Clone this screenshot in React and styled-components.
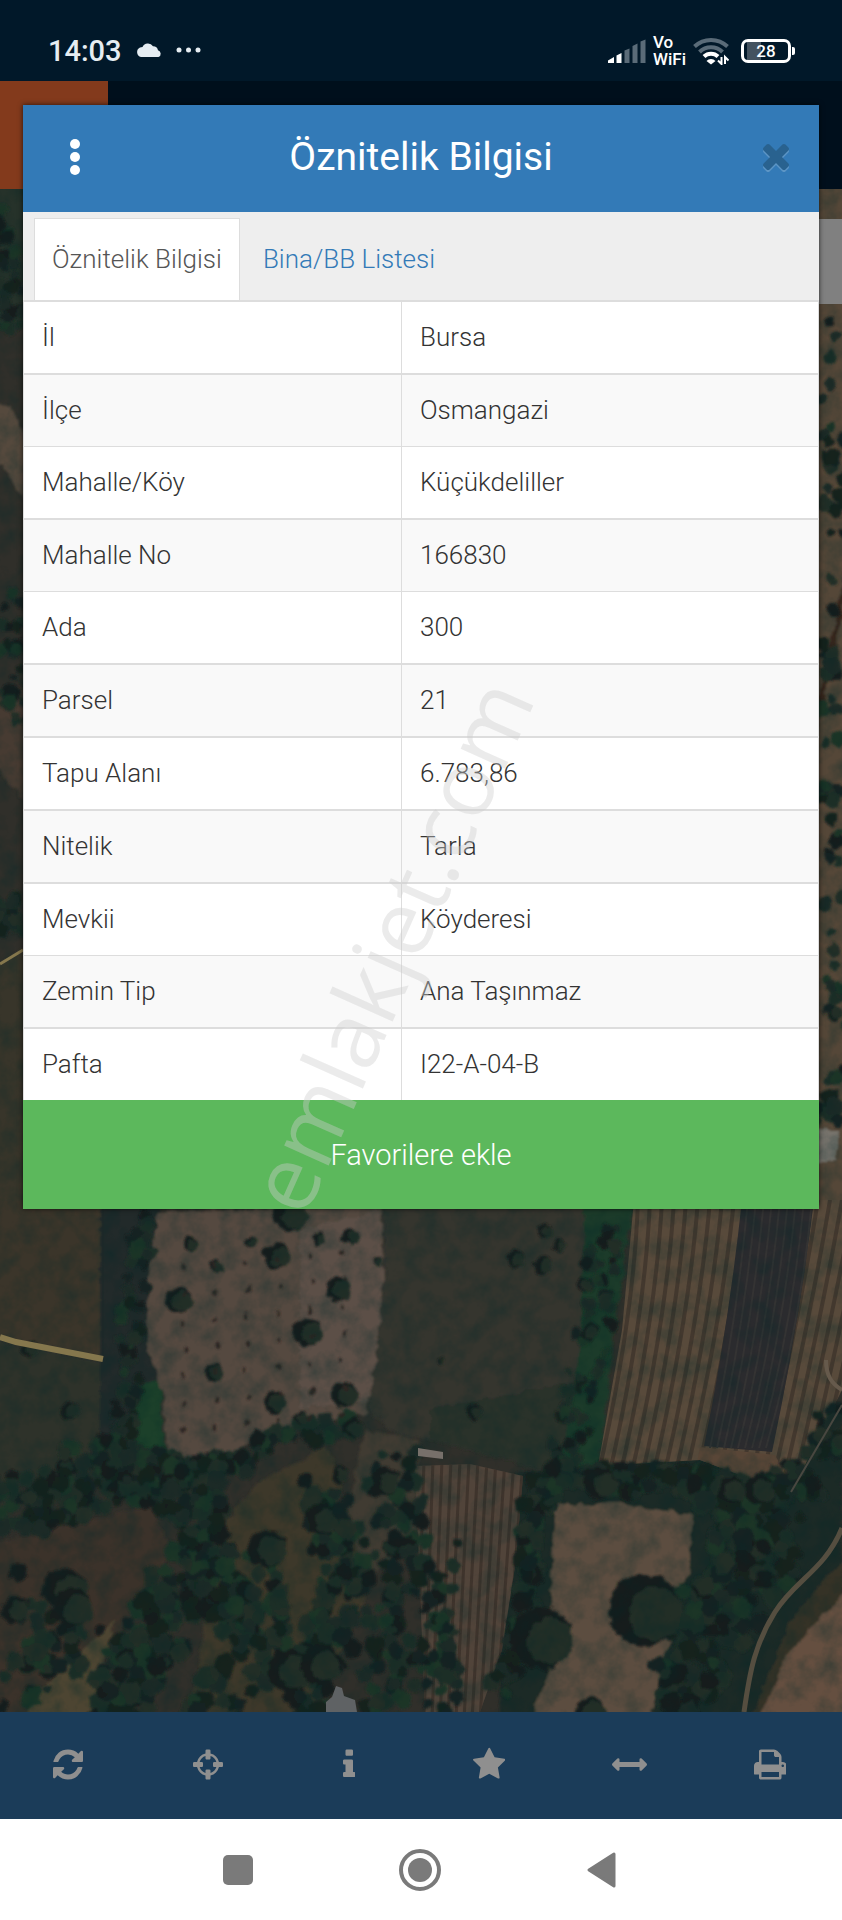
import React, { useState } from 'react';
import styled, { createGlobalStyle } from 'styled-components';

const ROWS = [
  ['İl', 'Bursa'],
  ['İlçe', 'Osmangazi'],
  ['Mahalle/Köy', 'Küçükdeliller'],
  ['Mahalle No', '166830'],
  ['Ada', '300'],
  ['Parsel', '21'],
  ['Tapu Alanı', '6.783,86'],
  ['Nitelik', 'Tarla'],
  ['Mevkii', 'Köyderesi'],
  ['Zemin Tip', 'Ana Taşınmaz'],
  ['Pafta', 'I22-A-04-B'],
];

// Toolbar glyphs, on a 1792 unit em
const TOOLS = [
  {
    label: 'Yenile',
    box: '0 -128 1536 1792',
    d: 'M1511 928q0 5-1 7-64 268-268 434.5t-478 166.5q-146 0-282.5-55t-243.5-157l-129 129q-19 19-45 19t-45-19-19-45v-448q0-26 19-45t45-19h448q26 0 45 19t19 45-19 45l-137 137q71 66 161 102t187 36q134 0 250-65t186-179q11-17 53-117 8-23 30-23h192q13 0 22.5 9.5t9.5 22.5zm25-800v448q0 26-19 45t-45 19h-448q-26 0-45-19t-19-45 19-45l138-138q-148-137-349-137-134 0-250 65t-186 179q-11 17-53 117-8 23-30 23h-199q-13 0-22.5-9.5t-9.5-22.5v-7q65-268 270-434.5t480-166.5q146 0 284 55.5t245 156.5l130-129q19-19 45-19t45 19 19 45z',
  },
  {
    label: 'Konum',
    box: '0 0 1536 1792',
    d: 'M1197 1024h-109q-26 0-45-19t-19-45v-128q0-26 19-45t45-19h109q-32-108-112.5-188.5t-188.5-112.5v109q0 26-19 45t-45 19h-128q-26 0-45-19t-19-45v-109q-108 32-188.5 112.5t-112.5 188.5h109q26 0 45 19t19 45v128q0 26-19 45t-45 19h-109q32 108 112.5 188.5t188.5 112.5v-109q0-26 19-45t45-19h128q26 0 45 19t19 45v109q108-32 188.5-112.5t112.5-188.5zm339-192v128q0 26-19 45t-45 19h-143q-37 161-154.5 278.5t-278.5 154.5v143q0 26-19 45t-45 19h-128q-26 0-45-19t-19-45v-143q-161-37-278.5-154.5t-154.5-278.5h-143q-26 0-45-19t-19-45v-128q0-26 19-45t45-19h143q37-161 154.5-278.5t278.5-154.5v-143q0-26 19-45t45-19h128q26 0 45 19t19 45v143q161 37 278.5 154.5t154.5 278.5h143q26 0 45 19t19 45z',
  },
  {
    label: 'Bilgi',
    box: '0 0 640 1792',
    d: 'M640 1344v128q0 26-19 45t-45 19h-512q-26 0-45-19t-19-45v-128q0-26 19-45t45-19h64v-384h-64q-26 0-45-19t-19-45v-128q0-26 19-45t45-19h384q26 0 45 19t19 45v576h64q26 0 45 19t19 45zm-128-1152v192q0 26-19 45t-45 19h-256q-26 0-45-19t-19-45v-192q0-26 19-45t45-19h256q26 0 45 19t19 45z',
  },
  {
    label: 'Favoriler',
    box: '0 0 1664 1792',
    d: 'M1664 647q0 22-26 48l-363 354 86 500q1 7 1 20 0 21-10.5 35.5t-30.5 14.5q-19 0-40-12l-449-236-449 236q-22 12-40 12-21 0-31.5-14.5t-10.5-35.5q0-6 2-20l86-500-364-354q-25-27-25-48 0-37 56-46l502-73 225-455q19-41 49-41t49 41l225 455 502 73q56 9 56 46z',
  },
  {
    label: 'Ölçüm',
    box: '0 0 1792 1792',
    d: 'M1792 896q0 26-19 45l-256 256q-19 19-45 19t-45-19-19-45v-128h-1024v128q0 26-19 45t-45 19-45-19l-256-256q-19-19-19-45t19-45l256-256q19-19 45-19t45 19 19 45v128h1024v-128q0-26 19-45t45-19 45 19l256 256q19 19 19 45z',
  },
  {
    label: 'Yazdır',
    box: '0 0 1664 1792',
    d: 'M384 1536h896v-256h-896v256zm0-640h896v-384h-160q-40 0-68-28t-28-68v-160h-640v640zm1152 64q0-26-19-45t-45-19-45 19-19 45 19 45 45 19 45-19 19-45zm128 0v416q0 13-9.5 22.5t-22.5 9.5h-224v160q0 40-28 68t-68 28h-960q-40 0-68-28t-28-68v-160h-224q-13 0-22.5-9.5t-9.5-22.5v-416q0-79 56.5-135.5t135.5-56.5h64v-544q0-40 28-68t68-28h672q40 0 88 20t76 48l152 152q28 28 48 76t20 88v256h64q79 0 135.5 56.5t56.5 135.5z',
  },
];

function App() {
  const [tab, setTab] = useState('info');

  return (
    <>
      <GlobalStyle />
      <Screen>
        <StatusBar />
        <AppBar><Brand /></AppBar>
        <MapArea>
          <SatelliteMap />
          <MapControl />
        </MapArea>
        <Toolbar>
          {TOOLS.map(t => (
            <ToolButton key={t.label} aria-label={t.label}>
              <svg viewBox={t.box}><path d={t.d} /></svg>
            </ToolButton>
          ))}
        </Toolbar>
        <SystemNav />

        <Overlay>
          <Dialog role="dialog" aria-labelledby="dialog-title">
            <DialogHeader>
              <HeaderButton aria-label="Menü">
                <svg width="12" height="38" viewBox="0 0 12 38" fill="#fff">
                  <circle cx="6" cy="6" r="5" />
                  <circle cx="6" cy="19" r="5" />
                  <circle cx="6" cy="32" r="5" />
                </svg>
              </HeaderButton>
              <Title id="dialog-title">Öznitelik Bilgisi</Title>
              <HeaderButton aria-label="Kapat">
                <CloseIcon viewBox="110 366 1188 1188">
                  <path d="M1298 1322q0 40-28 68l-136 136q-28 28-68 28t-68-28l-294-294-294 294q-28 28-68 28t-68-28l-136-136q-28-28-28-68t28-68l294-294-294-294q-28-28-28-68t28-68l136-136q28-28 68-28t68 28l294 294 294-294q28-28 68-28t68 28l136 136q28 28 28 68t-28 68l-294 294 294 294q28 28 28 68z" />
                </CloseIcon>
              </HeaderButton>
            </DialogHeader>

            <Tabs role="tablist">
              <Tab role="tab" aria-selected={tab === 'info'} $active={tab === 'info'} onClick={() => setTab('info')}>
                Öznitelik Bilgisi
              </Tab>
              <Tab role="tab" aria-selected={tab === 'list'} $active={tab === 'list'} onClick={() => setTab('list')}>
                Bina/BB Listesi
              </Tab>
            </Tabs>

            <Table>
              <tbody>
                {ROWS.map(([name, value]) => (
                  <Row key={name}>
                    <NameCell scope="row">{name}</NameCell>
                    <td>{value}</td>
                  </Row>
                ))}
              </tbody>
            </Table>

            <FavoriteButton>Favorilere ekle</FavoriteButton>
            <Watermark>emlakjet.com</Watermark>
          </Dialog>
        </Overlay>
      </Screen>
    </>
  );
}

function StatusBar() {
  return (
    <Status>
      <Clock>14:03</Clock>
      <svg width="26" height="16" viewBox="0 0 26 16" fill="#e6edf2">
        <path d="M5 14a5 5 0 0 1-1-9.400C5 4.300 5.500 4 6.500 4A6 6 0 0 1 17 3.200a5 5 0 0 1 5 4A3.600 3.600 0 0 1 22.500 14Z" />
      </svg>
      <Dots width="26" height="8" viewBox="0 0 26 8" fill="#e6edf2">
        <circle cx="3" cy="3" r="2.500" />
        <circle cx="12.500" cy="3" r="2.500" />
        <circle cx="22" cy="3" r="2.500" />
      </Dots>
      <StatusRight>
        <svg width="38" height="24" viewBox="0 0 38 24">
          <path d="M0 24v-2.500L6 18v6z" fill="#fff" />
          <path d="M8.500 24v-7.500l5-2.500v10z" fill="#fff" />
          <path d="M16.500 24V11.500l5-2v14.500zM24.500 24V7l5-2.500V24zM32.500 24V2.500l5-2V24z" fill="#5a6b78" />
        </svg>
        <VoWifi>{'Vo\nWiFi'}</VoWifi>
        <svg width="36" height="28" viewBox="0 0 36 28" fill="none">
          <path d="M1.500 9.500a24 24 0 0 1 33 0" stroke="#5a6b78" strokeWidth="4" />
          <path d="M6.500 15a16.500 16.500 0 0 1 23 0" stroke="#5a6b78" strokeWidth="4" />
          <path d="M11 19.500a10 10 0 0 1 14 0" stroke="#fff" strokeWidth="4" />
          <path d="M13.500 24a6 6 0 0 1 9 0L18 27.500z" fill="#fff" />
          <path d="M28.500 20v7l-3.500-3.500M32 27v-7l3.500 3.500" stroke="#fff" strokeWidth="2" />
        </svg>
        <Battery>
          <BatteryBody>28</BatteryBody>
          <BatteryTip />
        </Battery>
      </StatusRight>
    </Status>
  );
}

function SystemNav() {
  return (
    <NavBar>
      <NavButton aria-label="Son uygulamalar">
        <svg width="30" height="30"><rect width="30" height="30" rx="5" fill="#7a7a7a" /></svg>
      </NavButton>
      <NavButton aria-label="Ana ekran">
        <svg width="42" height="42" viewBox="0 0 42 42">
          <circle cx="21" cy="21" r="19" fill="none" stroke="#7a7a7a" strokeWidth="4" />
          <circle cx="21" cy="21" r="12" fill="#7a7a7a" />
        </svg>
      </NavButton>
      <NavButton aria-label="Geri">
        <svg width="30" height="36" viewBox="0 0 30 36">
          <path d="M27 2v32L2 18z" fill="#7a7a7a" stroke="#7a7a7a" strokeWidth="3" strokeLinejoin="round" />
        </svg>
      </NavButton>
    </NavBar>
  );
}

// --- MAP ---

function makeRandom(seed) {
  let s = seed;
  return () => {
    s = (s * 16807) % 2147483647;
    return s / 2147483647;
  };
}

const GREENS = ['#172321', '#1a2b25', '#16201f', '#1d2f28', '#202e26', '#141c1d', '#1b3528'];

// Trees strewn along a line: points, half width of the belt, how many, crown radius
const BELTS = [
  { pts: [[150, 1215], [138, 1260], [130, 1320], [128, 1390], [120, 1440], [90, 1465]], w: 11, n: 80, r: 7 },
  { pts: [[0, 1505], [60, 1495], [120, 1465], [150, 1480], [190, 1490]], w: 28, n: 190, r: 9 },
  { pts: [[150, 1470], [210, 1470], [270, 1445], [345, 1425]], w: 12, n: 90, r: 8 },
  { pts: [[190, 1480], [205, 1530], [170, 1600], [140, 1660], [110, 1712]], w: 27, n: 200, r: 10 },
  { pts: [[210, 1580], [250, 1590], [260, 1640], [220, 1712]], w: 32, n: 120, r: 10 },
  { pts: [[325, 1500], [345, 1560], [330, 1640], [300, 1712]], w: 22, n: 110, r: 10 },
  { pts: [[390, 1460], [400, 1540], [390, 1640], [390, 1712]], w: 26, n: 95, r: 9 },
  { pts: [[440, 1555], [435, 1640], [440, 1712]], w: 18, n: 50, r: 9 },
  { pts: [[605, 1210], [598, 1300], [580, 1400], [560, 1470]], w: 17, n: 60, r: 7 },
  { pts: [[540, 1500], [560, 1470], [620, 1482], [700, 1480]], w: 13, n: 90, r: 9 },
  { pts: [[700, 1490], [780, 1500], [842, 1420]], w: 22, n: 130, r: 9 },
  { pts: [[730, 1510], [770, 1560], [710, 1620], [680, 1712]], w: 30, n: 210, r: 10 },
  { pts: [[530, 1500], [530, 1570], [525, 1610], [500, 1690]], w: 10, n: 55, r: 9 },
  { pts: [[40, 1590], [80, 1620], [60, 1660], [20, 1690]], w: 26, n: 45, r: 9 },
  { pts: [[0, 210], [8, 270], [14, 330]], w: 12, n: 35, r: 7 },
  { pts: [[15, 580], [10, 650], [20, 720]], w: 12, n: 28, r: 7 },
  { pts: [[0, 900], [12, 930]], w: 14, n: 20, r: 8 },
  { pts: [[835, 255], [830, 400], [838, 560], [830, 760], [830, 860], [838, 1000], [828, 1120]], w: 13, n: 75, r: 8 },
];

// Single crowns: x, y, radius
const CROWNS = [
  [277, 1256, 13], [318, 1238, 7], [350, 1237, 8], [338, 1289, 12], [178, 1300, 13], [308, 1332, 14],
  [214, 1372, 9], [275, 1402, 11], [344, 1395, 13], [191, 1244, 7], [216, 1266, 6], [251, 1242, 6],
  [379, 1262, 4], [290, 1215, 17], [353, 1428, 10], [300, 1418, 6], [267, 1549, 19], [70, 1410, 9],
  [545, 1230, 7], [560, 1246, 6], [516, 1259, 9], [543, 1265, 9], [589, 1331, 8], [584, 1285, 7],
  [474, 1412, 8], [441, 1360, 4], [541, 1638, 31], [645, 1610, 36], [590, 1712, 15], [385, 1480, 14],
  [322, 1520, 15], [340, 1475, 8], [65, 1590, 22], [72, 1608, 20], [15, 1610, 14], [290, 1670, 22],
  [320, 1665, 20], [30, 1350, 8], [760, 1490, 15], [732, 1490, 13], [600, 1484, 16],
];

const SAPLINGS = [];
for (let row = 0; row < 7; row += 1) {
  for (let col = 0; col < 6; col += 1) {
    SAPLINGS.push([182 + col * 32 + (row % 2) * 3, 1268 + row * 27 - col * 3]);
  }
}

function beltTrees() {
  const rnd = makeRandom(4821);
  const trees = [];
  BELTS.forEach(({ pts, w, n, r }) => {
    for (let i = 0; i < n; i += 1) {
      const t = rnd() * (pts.length - 1);
      const k = Math.floor(t);
      const f = t - k;
      const x = pts[k][0] + (pts[k + 1][0] - pts[k][0]) * f + (rnd() - 0.5) * 2 * w;
      const y = pts[k][1] + (pts[k + 1][1] - pts[k][1]) * f + (rnd() - 0.5) * 2 * w;
      trees.push({ x, y, r: r * (0.5 + rnd() * 0.6), fill: GREENS[Math.floor(rnd() * GREENS.length)] });
    }
  });
  return trees;
}

const TREES = beltTrees();

function SatelliteMap() {
  return (
    <MapSvg viewBox="0 189 842 1523" preserveAspectRatio="xMidYMax slice" aria-hidden="true">
      <defs>
        <filter id="rough" x="0" y="0" width="100%" height="100%">
          <feTurbulence type="fractalNoise" baseFrequency="0.09" numOctaves="3" seed="4" result="n" />
          <feDisplacementMap in="SourceGraphic" in2="n" scale="9" xChannelSelector="R" yChannelSelector="G" />
          <feGaussianBlur stdDeviation="1.300" />
        </filter>
        <filter id="grain" x="0" y="0" width="100%" height="100%">
          <feTurbulence type="fractalNoise" baseFrequency="0.05" numOctaves="4" seed="9" />
          <feColorMatrix values="0 0 0 0 0  0 0 0 0 0.02  0 0 0 0 0.02  1.600 0 0 0 -0.600" />
        </filter>
        <clipPath id="furrows"><path d="M634 1200H842V1390L822 1430 791 1494 700 1460 598 1466 622 1330Z" /></clipPath>
        <clipPath id="plot"><path d="M415 1466 470 1464 523 1476 516 1560 502 1650 480 1712H425Z" /></clipPath>
      </defs>

      <rect y="189" width="842" height="1523" fill="#302f2a" />
      <g filter="url(#rough)">
        {/* strips on both sides of the dialog */}
        <path d="M-10 180H40V330H-10Z" fill="#25302a" />
        <path d="M-10 400 10 405 40 470V520L-10 450Z" fill="#54483d" />
        <path d="M-10 700 40 680V820L-10 760Z" fill="#463b31" />
        <path d="M-10 970 40 940V1220H-10Z" fill="#38362a" />
        <path d="M810 180H852V1220H810Z" fill="#544739" />
        <path d="M815 1130h22v32h-22z" fill="#77736c" />
        <path d="M850 560 830 660 812 740" fill="none" stroke="#38281f" strokeWidth="6" />

        {/* fields */}
        <path d="M-10 1200H103V1360L-10 1337Z" fill="#3a3529" />
        <path d="M-10 1340 103 1362V1440L60 1480-10 1490Z" fill="#2e302c" />
        <path d="M100 1200H160V1460H100Z" fill="#202b29" />
        <path d="M135 1385 160 1380 165 1450 125 1450Z" fill="#1f402a" />
        <path d="M157 1212 382 1205 384 1281 377 1349 367 1413 277 1432 207 1464 167 1450 163 1396 147 1342 150 1275Z" fill="#554940" />
        <path d="M300 1230 380 1210 384 1281 372 1400 300 1410Z" fill="#5c5046" />
        <path d="M384 1200H600L575 1450 400 1436 370 1412 385 1281Z" fill="#35342f" />
        <path d="M430 1410 580 1380 560 1475 430 1440Z" fill="#2a322b" />
        <path d="M585 1200H634L615 1330 598 1470H560L580 1350Z" fill="#1d3a29" />
        <path d="M-10 1545 150 1505 172 1550 115 1640 60 1722H-10Z" fill="#3a332a" />
        <path d="M40 1690 115 1620 90 1722H20Z" fill="#4e4432" />
        <path d="M255 1485 325 1447 345 1480 325 1530 380 1530 365 1600 310 1722H190L220 1530Z" fill="#3e392c" />
        <path d="M365 1430 420 1440 420 1530 370 1580 345 1520Z" fill="#403a30" />
        <path d="M500 1475 842 1440V1722H500Z" fill="#1f2b26" />
        <path d="M556 1503 620 1504 694 1515 689 1575 665 1600 670 1640 650 1722H530L556 1650 550 1590Z" fill="#5b4e40" />
        <path d="M842 1560 790 1620 750 1722H852Z" fill="#343127" />
        <path d="M852 1585 790 1650 758 1722H852Z" fill="#65503f" />
      </g>

      <g clipPath="url(#furrows)">
        <rect x="590" y="1200" width="260" height="300" fill="#584a3b" />
        {Array.from({ length: 22 }, (_, i) => (
          <path key={i} d={`M${638 + i * 12} 1200 Q${634 + i * 11} 1320 ${597 + i * 11} 1480`} fill="none" stroke="#352d26" strokeWidth="4" opacity="0.600" />
        ))}
        <path d="M742 1200H814Q798 1330 772 1452L704 1446Q728 1330 742 1200Z" fill="#2b2b2e" />
        {Array.from({ length: 9 }, (_, i) => (
          <path key={i} d={`M${748 + i * 8} 1200 Q${736 + i * 8} 1330 ${710 + i * 7} 1448`} fill="none" stroke="#343333" strokeWidth="2" />
        ))}
        <path d="M700 1447 775 1455 800 1500H690Z" fill="#594637" />
      </g>
      <g clipPath="url(#plot)">
        <rect x="410" y="1460" width="120" height="260" fill="#51443a" />
        {Array.from({ length: 12 }, (_, i) => (
          <path key={i} d={`M${424 + i * 9} 1460 L${416 + i * 8} 1720`} stroke="#382e27" strokeWidth="3" opacity="0.700" />
        ))}
      </g>

      <g filter="url(#rough)">
        <path d="M-5 1718" />
        {TREES.map((t, i) => <circle key={i} cx={t.x} cy={t.y} r={t.r} fill={t.fill} />)}
        {CROWNS.map(([x, y, r]) => (
          <g key={`${x}-${y}`}>
            <circle cx={x} cy={y} r={r} fill="#171f1d" />
            <circle cx={x + r * 0.3} cy={y + r * 0.1} r={r * 0.75} fill="#212f27" />
          </g>
        ))}
        {SAPLINGS.map(([x, y]) => <ellipse key={`${x}-${y}`} cx={x} cy={y} rx="2" ry="3" fill="#2d2723" />)}
      </g>

      <rect y="189" width="842" height="1523" filter="url(#grain)" opacity="0.400" />
      <path d="M103 1208V1360" stroke="#1d2928" strokeWidth="1" />
      <path d="M0 1337 16 1342 103 1359" fill="none" stroke="#85774d" strokeWidth="6" />
      <path d="M0 964 23 950" stroke="#85774d" strokeWidth="3" />
      <path d="M842 1528C825 1570 795 1580 775 1612S750 1670 744 1712" fill="none" stroke="#554e40" strokeWidth="5" />
      <path d="M826 1360C826 1376 832 1384 842 1390" fill="none" stroke="#665a4c" strokeWidth="4" />
      <path d="M791 1492 842 1405" fill="none" stroke="#484740" strokeWidth="2" />
      <path d="M418 1448l25 4v7l-25-3z" fill="#77706a" />
      <path d="M326 1702l6-5 4-11 6 2 2 8 11 4 2 12h-31z" fill="#5f6264" />
    </MapSvg>
  );
}

const GlobalStyle = createGlobalStyle`
  *, *::before, *::after { box-sizing: border-box; }
  body { margin: 0; background: #fff; font-family: Roboto, 'Liberation Sans', sans-serif; }
  button { margin: 0; padding: 0; border: 0; background: none; font: inherit; cursor: pointer; }
  svg { display: block; }
`;

const Screen = styled.div`
  position: relative;
  display: flex; flex-direction: column;
  min-height: 100vh;
`;

const Status = styled.header`
  display: flex; align-items: center;
  height: 81px; padding: 20px 47px 0 48px;
  background: #011829; color: #e6edf2;
`;

const Clock = styled.time`
  margin-right: 14px;
  font-size: 29px; font-weight: 500; line-height: 36px;
`;

const Dots = styled.svg`margin-left: 14px;`;

const StatusRight = styled.div`
  display: flex; align-items: center; gap: 7px;
  margin-left: auto;
`;

const VoWifi = styled.span`
  color: #fff; white-space: pre-line;
  font-size: 17px; font-weight: 500; line-height: 17px;
`;

const Battery = styled.div`
  display: flex; align-items: center; gap: 1px;
  margin-left: 5px;
`;

const BatteryBody = styled.div`
  width: 50px; height: 24px;
  border: 3px solid #fff; border-radius: 7px;
  background: linear-gradient(to right, #43525f 14px, transparent 14px) 3px 0 no-repeat;
  color: #fff; font-size: 17px; font-weight: 500; line-height: 19px; text-align: center;
`;

const BatteryTip = styled.div`
  width: 3px; height: 8px;
  border-radius: 0 2px 2px 0; background: #fff;
`;

const AppBar = styled.div`
  height: 108px;
  background: #000f1c;
`;

const Brand = styled.div`
  width: 108px; height: 100%;
  background: #833a1c;
`;

const MapArea = styled.main`
  position: relative;
  flex: 1; overflow: hidden;
`;

const MapSvg = styled.svg`
  position: absolute; inset: 0;
  width: 100%; height: 100%;
`;

const MapControl = styled.div`
  position: absolute; top: 30px; right: 0;
  width: 96px; height: 85px;
  background: #808080;
`;

const Toolbar = styled.div`
  display: grid; grid-template-columns: repeat(6, 1fr);
  height: 107px;
  background: #1b3c59;
`;

const ToolButton = styled.button`
  display: flex; align-items: center; justify-content: center;
  padding: 0 4px 2px 0;
  svg { height: 35px; fill: #8f8f8f; }
`;

const NavBar = styled.nav`
  display: flex; justify-content: center;
  height: 101px; padding-right: 2px;
  background: #fff;
`;

const NavButton = styled.button`
  display: flex; align-items: center; justify-content: center;
  width: 182px;
`;

const Overlay = styled.div`
  position: absolute; inset: 0;
  padding: 105px 23px 0;
`;

const Dialog = styled.section`
  position: relative;
  background: #fff;
  box-shadow: 0 0 5px rgba(0, 0, 0, 0.7);
`;

const DialogHeader = styled.div`
  display: flex; align-items: center;
  height: 107px; padding: 0 17px 4px 26px;
  background: #337ab7; color: #fff;
`;

const HeaderButton = styled.button`
  display: flex; align-items: center; justify-content: center;
  width: 52px; height: 52px;
`;

const CloseIcon = styled.svg`
  width: 26px; height: 26px;
  fill: #29628f;
  filter: drop-shadow(0 2px 0 #5c95c5);
`;

const Title = styled.h1`
  flex: 1; margin: 0; padding-right: 9px;
  font-size: 39px; font-weight: 400; line-height: 48px; text-align: center;
`;

const Tabs = styled.div`
  display: flex;
  height: 90px; padding: 6px 11px 0;
  background: #eee;
  border-bottom: 2px solid #ddd;
`;

const Tab = styled.button`
  padding: 0 17px 2px; margin-right: 5px;
  border: 1px solid ${props => props.$active ? '#ddd' : 'transparent'};
  border-bottom: 0;
  background: ${props => props.$active ? '#fff' : 'transparent'};
  color: ${props => props.$active ? '#555' : '#337ab7'};
  font-size: 26px; font-weight: 300; line-height: 36px;
`;

const Table = styled.table`
  width: 100%;
  border-collapse: separate; border-spacing: 0;
  border: solid #ddd; border-width: 0 1px;
  table-layout: fixed;
  color: #333; font-size: 26px; font-weight: 300; line-height: 35px;
`;

const Row = styled.tr`
  &:nth-child(even) { background: #f9f9f9; }
  > * { padding: 18px; border-bottom: 2px solid #ddd; text-align: left; }
  &:nth-child(2) > *, &:nth-child(4) > *, &:nth-child(9) > * { border-bottom-width: 1px; }
  &:last-child > * { border-bottom: 0; }
`;

const NameCell = styled.th`
  width: 378px;
  border-right: 1px solid #ddd;
  font-weight: 300;
`;

const FavoriteButton = styled.button`
  display: block; width: 100%; height: 109px;
  background: #5cb85c; color: #fff;
  font-size: 29px; font-weight: 300; line-height: 36px;
`;

const Watermark = styled.div`
  position: absolute; left: 366px; top: 840px;
  transform: translate(-50%, -50%) rotate(-66deg);
  font-family: 'Open Sans', sans-serif; font-size: 91px; line-height: 91px;
  color: rgba(205, 205, 205, 0.4);
  pointer-events: none;
`;

export default App;
